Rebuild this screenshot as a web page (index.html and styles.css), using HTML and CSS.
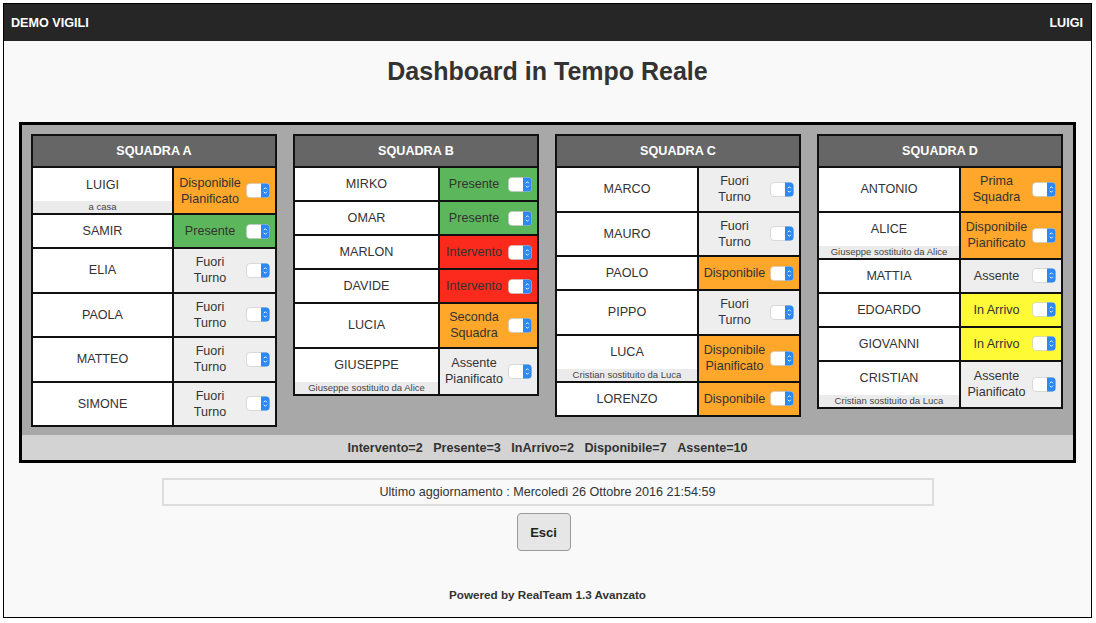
FILE: index.html
```html
<!DOCTYPE html>
<html lang="it">
<head>
<meta charset="utf-8">
<title>Dashboard in Tempo Reale</title>
<link rel="stylesheet" href="styles.css">
</head>
<body>
<div class="frame">
  <header class="topbar">
    <span class="brand">DEMO VIGILI</span>
    <span class="user">LUIGI</span>
  </header>

  <h1 class="title">Dashboard in Tempo Reale</h1>

  <section class="panel">
    <div class="squads">
      <div class="squad sq-a">
        <div class="sq-head">SQUADRA A</div>
        <div class="row">
          <div class="name"><span class="nm">LUIGI</span><span class="sub">a casa</span></div>
          <div class="st orange"><span class="lbl">Disponibile<br>Pianificato</span><svg class="tg" width="24" height="15" viewBox="0 0 24 15"><rect x=".5" y=".5" width="23" height="14" rx="3.5" fill="#fff" stroke="#c4c4c4" stroke-width=".6"/><path d="M15 .5h5a3.5 3.5 0 0 1 3.5 3.5v7a3.5 3.5 0 0 1-3.5 3.5h-5z" fill="#2b88f4"/><path d="M17.7 6.3 19.3 4.7 20.9 6.3M17.7 8.7 19.3 10.3 20.9 8.7" fill="none" stroke="#fff" stroke-width=".9"/></svg></div>
        </div>
        <div class="row">
          <div class="name"><span class="nm">SAMIR</span></div>
          <div class="st green"><span class="lbl">Presente</span><svg class="tg" width="24" height="15" viewBox="0 0 24 15"><rect x=".5" y=".5" width="23" height="14" rx="3.5" fill="#fff" stroke="#c4c4c4" stroke-width=".6"/><path d="M15 .5h5a3.5 3.5 0 0 1 3.5 3.5v7a3.5 3.5 0 0 1-3.5 3.5h-5z" fill="#2b88f4"/><path d="M17.7 6.3 19.3 4.7 20.9 6.3M17.7 8.7 19.3 10.3 20.9 8.7" fill="none" stroke="#fff" stroke-width=".9"/></svg></div>
        </div>
        <div class="row">
          <div class="name"><span class="nm">ELIA</span></div>
          <div class="st grey two"><span class="lbl">Fuori<br>Turno</span><svg class="tg" width="24" height="15" viewBox="0 0 24 15"><rect x=".5" y=".5" width="23" height="14" rx="3.5" fill="#fff" stroke="#c4c4c4" stroke-width=".6"/><path d="M15 .5h5a3.5 3.5 0 0 1 3.5 3.5v7a3.5 3.5 0 0 1-3.5 3.5h-5z" fill="#2b88f4"/><path d="M17.7 6.3 19.3 4.7 20.9 6.3M17.7 8.7 19.3 10.3 20.9 8.7" fill="none" stroke="#fff" stroke-width=".9"/></svg></div>
        </div>
        <div class="row">
          <div class="name"><span class="nm">PAOLA</span></div>
          <div class="st grey two"><span class="lbl">Fuori<br>Turno</span><svg class="tg" width="24" height="15" viewBox="0 0 24 15"><rect x=".5" y=".5" width="23" height="14" rx="3.5" fill="#fff" stroke="#c4c4c4" stroke-width=".6"/><path d="M15 .5h5a3.5 3.5 0 0 1 3.5 3.5v7a3.5 3.5 0 0 1-3.5 3.5h-5z" fill="#2b88f4"/><path d="M17.7 6.3 19.3 4.7 20.9 6.3M17.7 8.7 19.3 10.3 20.9 8.7" fill="none" stroke="#fff" stroke-width=".9"/></svg></div>
        </div>
        <div class="row">
          <div class="name"><span class="nm">MATTEO</span></div>
          <div class="st grey two"><span class="lbl">Fuori<br>Turno</span><svg class="tg" width="24" height="15" viewBox="0 0 24 15"><rect x=".5" y=".5" width="23" height="14" rx="3.5" fill="#fff" stroke="#c4c4c4" stroke-width=".6"/><path d="M15 .5h5a3.5 3.5 0 0 1 3.5 3.5v7a3.5 3.5 0 0 1-3.5 3.5h-5z" fill="#2b88f4"/><path d="M17.7 6.3 19.3 4.7 20.9 6.3M17.7 8.7 19.3 10.3 20.9 8.7" fill="none" stroke="#fff" stroke-width=".9"/></svg></div>
        </div>
        <div class="row">
          <div class="name"><span class="nm">SIMONE</span></div>
          <div class="st grey two"><span class="lbl">Fuori<br>Turno</span><svg class="tg" width="24" height="15" viewBox="0 0 24 15"><rect x=".5" y=".5" width="23" height="14" rx="3.5" fill="#fff" stroke="#c4c4c4" stroke-width=".6"/><path d="M15 .5h5a3.5 3.5 0 0 1 3.5 3.5v7a3.5 3.5 0 0 1-3.5 3.5h-5z" fill="#2b88f4"/><path d="M17.7 6.3 19.3 4.7 20.9 6.3M17.7 8.7 19.3 10.3 20.9 8.7" fill="none" stroke="#fff" stroke-width=".9"/></svg></div>
        </div>
      </div>

      <div class="squad sq-b">
        <div class="sq-head">SQUADRA B</div>
        <div class="row">
          <div class="name"><span class="nm">MIRKO</span></div>
          <div class="st green"><span class="lbl">Presente</span><svg class="tg" width="24" height="15" viewBox="0 0 24 15"><rect x=".5" y=".5" width="23" height="14" rx="3.5" fill="#fff" stroke="#c4c4c4" stroke-width=".6"/><path d="M15 .5h5a3.5 3.5 0 0 1 3.5 3.5v7a3.5 3.5 0 0 1-3.5 3.5h-5z" fill="#2b88f4"/><path d="M17.7 6.3 19.3 4.7 20.9 6.3M17.7 8.7 19.3 10.3 20.9 8.7" fill="none" stroke="#fff" stroke-width=".9"/></svg></div>
        </div>
        <div class="row">
          <div class="name"><span class="nm">OMAR</span></div>
          <div class="st green"><span class="lbl">Presente</span><svg class="tg" width="24" height="15" viewBox="0 0 24 15"><rect x=".5" y=".5" width="23" height="14" rx="3.5" fill="#fff" stroke="#c4c4c4" stroke-width=".6"/><path d="M15 .5h5a3.5 3.5 0 0 1 3.5 3.5v7a3.5 3.5 0 0 1-3.5 3.5h-5z" fill="#2b88f4"/><path d="M17.7 6.3 19.3 4.7 20.9 6.3M17.7 8.7 19.3 10.3 20.9 8.7" fill="none" stroke="#fff" stroke-width=".9"/></svg></div>
        </div>
        <div class="row">
          <div class="name"><span class="nm">MARLON</span></div>
          <div class="st red"><span class="lbl">Intervento</span><svg class="tg" width="24" height="15" viewBox="0 0 24 15"><rect x=".5" y=".5" width="23" height="14" rx="3.5" fill="#fff" stroke="#c4c4c4" stroke-width=".6"/><path d="M15 .5h5a3.5 3.5 0 0 1 3.5 3.5v7a3.5 3.5 0 0 1-3.5 3.5h-5z" fill="#2b88f4"/><path d="M17.7 6.3 19.3 4.7 20.9 6.3M17.7 8.7 19.3 10.3 20.9 8.7" fill="none" stroke="#fff" stroke-width=".9"/></svg></div>
        </div>
        <div class="row">
          <div class="name"><span class="nm">DAVIDE</span></div>
          <div class="st red"><span class="lbl">Intervento</span><svg class="tg" width="24" height="15" viewBox="0 0 24 15"><rect x=".5" y=".5" width="23" height="14" rx="3.5" fill="#fff" stroke="#c4c4c4" stroke-width=".6"/><path d="M15 .5h5a3.5 3.5 0 0 1 3.5 3.5v7a3.5 3.5 0 0 1-3.5 3.5h-5z" fill="#2b88f4"/><path d="M17.7 6.3 19.3 4.7 20.9 6.3M17.7 8.7 19.3 10.3 20.9 8.7" fill="none" stroke="#fff" stroke-width=".9"/></svg></div>
        </div>
        <div class="row">
          <div class="name"><span class="nm">LUCIA</span></div>
          <div class="st orange two"><span class="lbl">Seconda<br>Squadra</span><svg class="tg" width="24" height="15" viewBox="0 0 24 15"><rect x=".5" y=".5" width="23" height="14" rx="3.5" fill="#fff" stroke="#c4c4c4" stroke-width=".6"/><path d="M15 .5h5a3.5 3.5 0 0 1 3.5 3.5v7a3.5 3.5 0 0 1-3.5 3.5h-5z" fill="#2b88f4"/><path d="M17.7 6.3 19.3 4.7 20.9 6.3M17.7 8.7 19.3 10.3 20.9 8.7" fill="none" stroke="#fff" stroke-width=".9"/></svg></div>
        </div>
        <div class="row">
          <div class="name"><span class="nm">GIUSEPPE</span><span class="sub">Giuseppe sostituito da Alice</span></div>
          <div class="st grey"><span class="lbl">Assente<br>Pianificato</span><svg class="tg" width="24" height="15" viewBox="0 0 24 15"><rect x=".5" y=".5" width="23" height="14" rx="3.5" fill="#fff" stroke="#c4c4c4" stroke-width=".6"/><path d="M15 .5h5a3.5 3.5 0 0 1 3.5 3.5v7a3.5 3.5 0 0 1-3.5 3.5h-5z" fill="#2b88f4"/><path d="M17.7 6.3 19.3 4.7 20.9 6.3M17.7 8.7 19.3 10.3 20.9 8.7" fill="none" stroke="#fff" stroke-width=".9"/></svg></div>
        </div>
      </div>

      <div class="squad sq-c">
        <div class="sq-head">SQUADRA C</div>
        <div class="row">
          <div class="name"><span class="nm">MARCO</span></div>
          <div class="st grey two"><span class="lbl">Fuori<br>Turno</span><svg class="tg" width="24" height="15" viewBox="0 0 24 15"><rect x=".5" y=".5" width="23" height="14" rx="3.5" fill="#fff" stroke="#c4c4c4" stroke-width=".6"/><path d="M15 .5h5a3.5 3.5 0 0 1 3.5 3.5v7a3.5 3.5 0 0 1-3.5 3.5h-5z" fill="#2b88f4"/><path d="M17.7 6.3 19.3 4.7 20.9 6.3M17.7 8.7 19.3 10.3 20.9 8.7" fill="none" stroke="#fff" stroke-width=".9"/></svg></div>
        </div>
        <div class="row">
          <div class="name"><span class="nm">MAURO</span></div>
          <div class="st grey two"><span class="lbl">Fuori<br>Turno</span><svg class="tg" width="24" height="15" viewBox="0 0 24 15"><rect x=".5" y=".5" width="23" height="14" rx="3.5" fill="#fff" stroke="#c4c4c4" stroke-width=".6"/><path d="M15 .5h5a3.5 3.5 0 0 1 3.5 3.5v7a3.5 3.5 0 0 1-3.5 3.5h-5z" fill="#2b88f4"/><path d="M17.7 6.3 19.3 4.7 20.9 6.3M17.7 8.7 19.3 10.3 20.9 8.7" fill="none" stroke="#fff" stroke-width=".9"/></svg></div>
        </div>
        <div class="row">
          <div class="name"><span class="nm">PAOLO</span></div>
          <div class="st orange"><span class="lbl">Disponibile</span><svg class="tg" width="24" height="15" viewBox="0 0 24 15"><rect x=".5" y=".5" width="23" height="14" rx="3.5" fill="#fff" stroke="#c4c4c4" stroke-width=".6"/><path d="M15 .5h5a3.5 3.5 0 0 1 3.5 3.5v7a3.5 3.5 0 0 1-3.5 3.5h-5z" fill="#2b88f4"/><path d="M17.7 6.3 19.3 4.7 20.9 6.3M17.7 8.7 19.3 10.3 20.9 8.7" fill="none" stroke="#fff" stroke-width=".9"/></svg></div>
        </div>
        <div class="row">
          <div class="name"><span class="nm">PIPPO</span></div>
          <div class="st grey two"><span class="lbl">Fuori<br>Turno</span><svg class="tg" width="24" height="15" viewBox="0 0 24 15"><rect x=".5" y=".5" width="23" height="14" rx="3.5" fill="#fff" stroke="#c4c4c4" stroke-width=".6"/><path d="M15 .5h5a3.5 3.5 0 0 1 3.5 3.5v7a3.5 3.5 0 0 1-3.5 3.5h-5z" fill="#2b88f4"/><path d="M17.7 6.3 19.3 4.7 20.9 6.3M17.7 8.7 19.3 10.3 20.9 8.7" fill="none" stroke="#fff" stroke-width=".9"/></svg></div>
        </div>
        <div class="row">
          <div class="name"><span class="nm">LUCA</span><span class="sub">Cristian sostituito da Luca</span></div>
          <div class="st orange"><span class="lbl">Disponibile<br>Pianificato</span><svg class="tg" width="24" height="15" viewBox="0 0 24 15"><rect x=".5" y=".5" width="23" height="14" rx="3.5" fill="#fff" stroke="#c4c4c4" stroke-width=".6"/><path d="M15 .5h5a3.5 3.5 0 0 1 3.5 3.5v7a3.5 3.5 0 0 1-3.5 3.5h-5z" fill="#2b88f4"/><path d="M17.7 6.3 19.3 4.7 20.9 6.3M17.7 8.7 19.3 10.3 20.9 8.7" fill="none" stroke="#fff" stroke-width=".9"/></svg></div>
        </div>
        <div class="row">
          <div class="name"><span class="nm">LORENZO</span></div>
          <div class="st orange"><span class="lbl">Disponibile</span><svg class="tg" width="24" height="15" viewBox="0 0 24 15"><rect x=".5" y=".5" width="23" height="14" rx="3.5" fill="#fff" stroke="#c4c4c4" stroke-width=".6"/><path d="M15 .5h5a3.5 3.5 0 0 1 3.5 3.5v7a3.5 3.5 0 0 1-3.5 3.5h-5z" fill="#2b88f4"/><path d="M17.7 6.3 19.3 4.7 20.9 6.3M17.7 8.7 19.3 10.3 20.9 8.7" fill="none" stroke="#fff" stroke-width=".9"/></svg></div>
        </div>
      </div>

      <div class="squad sq-d">
        <div class="sq-head">SQUADRA D</div>
        <div class="row">
          <div class="name"><span class="nm">ANTONIO</span></div>
          <div class="st orange two"><span class="lbl">Prima<br>Squadra</span><svg class="tg" width="24" height="15" viewBox="0 0 24 15"><rect x=".5" y=".5" width="23" height="14" rx="3.5" fill="#fff" stroke="#c4c4c4" stroke-width=".6"/><path d="M15 .5h5a3.5 3.5 0 0 1 3.5 3.5v7a3.5 3.5 0 0 1-3.5 3.5h-5z" fill="#2b88f4"/><path d="M17.7 6.3 19.3 4.7 20.9 6.3M17.7 8.7 19.3 10.3 20.9 8.7" fill="none" stroke="#fff" stroke-width=".9"/></svg></div>
        </div>
        <div class="row">
          <div class="name"><span class="nm">ALICE</span><span class="sub">Giuseppe sostituito da Alice</span></div>
          <div class="st orange"><span class="lbl">Disponibile<br>Pianificato</span><svg class="tg" width="24" height="15" viewBox="0 0 24 15"><rect x=".5" y=".5" width="23" height="14" rx="3.5" fill="#fff" stroke="#c4c4c4" stroke-width=".6"/><path d="M15 .5h5a3.5 3.5 0 0 1 3.5 3.5v7a3.5 3.5 0 0 1-3.5 3.5h-5z" fill="#2b88f4"/><path d="M17.7 6.3 19.3 4.7 20.9 6.3M17.7 8.7 19.3 10.3 20.9 8.7" fill="none" stroke="#fff" stroke-width=".9"/></svg></div>
        </div>
        <div class="row">
          <div class="name"><span class="nm">MATTIA</span></div>
          <div class="st grey"><span class="lbl">Assente</span><svg class="tg" width="24" height="15" viewBox="0 0 24 15"><rect x=".5" y=".5" width="23" height="14" rx="3.5" fill="#fff" stroke="#c4c4c4" stroke-width=".6"/><path d="M15 .5h5a3.5 3.5 0 0 1 3.5 3.5v7a3.5 3.5 0 0 1-3.5 3.5h-5z" fill="#2b88f4"/><path d="M17.7 6.3 19.3 4.7 20.9 6.3M17.7 8.7 19.3 10.3 20.9 8.7" fill="none" stroke="#fff" stroke-width=".9"/></svg></div>
        </div>
        <div class="row">
          <div class="name"><span class="nm">EDOARDO</span></div>
          <div class="st yellow"><span class="lbl">In Arrivo</span><svg class="tg" width="24" height="15" viewBox="0 0 24 15"><rect x=".5" y=".5" width="23" height="14" rx="3.5" fill="#fff" stroke="#c4c4c4" stroke-width=".6"/><path d="M15 .5h5a3.5 3.5 0 0 1 3.5 3.5v7a3.5 3.5 0 0 1-3.5 3.5h-5z" fill="#2b88f4"/><path d="M17.7 6.3 19.3 4.7 20.9 6.3M17.7 8.7 19.3 10.3 20.9 8.7" fill="none" stroke="#fff" stroke-width=".9"/></svg></div>
        </div>
        <div class="row">
          <div class="name"><span class="nm">GIOVANNI</span></div>
          <div class="st yellow"><span class="lbl">In Arrivo</span><svg class="tg" width="24" height="15" viewBox="0 0 24 15"><rect x=".5" y=".5" width="23" height="14" rx="3.5" fill="#fff" stroke="#c4c4c4" stroke-width=".6"/><path d="M15 .5h5a3.5 3.5 0 0 1 3.5 3.5v7a3.5 3.5 0 0 1-3.5 3.5h-5z" fill="#2b88f4"/><path d="M17.7 6.3 19.3 4.7 20.9 6.3M17.7 8.7 19.3 10.3 20.9 8.7" fill="none" stroke="#fff" stroke-width=".9"/></svg></div>
        </div>
        <div class="row">
          <div class="name"><span class="nm">CRISTIAN</span><span class="sub">Cristian sostituito da Luca</span></div>
          <div class="st grey"><span class="lbl">Assente<br>Pianificato</span><svg class="tg" width="24" height="15" viewBox="0 0 24 15"><rect x=".5" y=".5" width="23" height="14" rx="3.5" fill="#fff" stroke="#c4c4c4" stroke-width=".6"/><path d="M15 .5h5a3.5 3.5 0 0 1 3.5 3.5v7a3.5 3.5 0 0 1-3.5 3.5h-5z" fill="#2b88f4"/><path d="M17.7 6.3 19.3 4.7 20.9 6.3M17.7 8.7 19.3 10.3 20.9 8.7" fill="none" stroke="#fff" stroke-width=".9"/></svg></div>
        </div>
      </div>
    </div>
    <div class="stats">Intervento=2&nbsp;&nbsp;&nbsp;Presente=3&nbsp;&nbsp;&nbsp;InArrivo=2&nbsp;&nbsp;&nbsp;Disponibile=7&nbsp;&nbsp;&nbsp;Assente=10</div>
  </section>

  <div class="update">Ultimo aggiornamento : Mercoledì 26 Ottobre 2016 21:54:59</div>
  <div class="actions"><button class="btn" type="button">Esci</button></div>
  <footer class="powered">Powered by RealTeam 1.3 Avanzato</footer>
</div>
</body>
</html>
```

FILE: styles.css
```css
* { box-sizing: border-box; }

html, body {
  margin: 0;
  padding: 0;
  background: #ffffff;
}

body {
  font-family: "Liberation Sans", Arial, Helvetica, sans-serif;
  color: #333333;
  padding: 3px 4px 0 3px;
}

.frame {
  height: 615px;
  border: 1px solid #000000;
  background: #f9f9f9;
  display: flex;
  flex-direction: column;
}

.topbar {
  height: 37px;
  background: #262626;
  color: #ffffff;
  font-weight: bold;
  font-size: 12.6px;
  display: flex;
  align-items: center;
  justify-content: space-between;
  padding: 0 8px 0 7px;
}

.title {
  margin: 15px 0 0;
  font-size: 25px;
  line-height: 30px;
  font-weight: bold;
  text-align: center;
  color: #333333;
}

.panel {
  margin: 36px 15px 0;
  border: 3px solid #000000;
  background: #a8a8a8;
}

.squads {
  display: grid;
  grid-template-columns: repeat(4, 1fr);
  column-gap: 16px;
  align-items: start;
  padding: 9px 10px 8px 9px;
}

.squad {
  border: 2px solid #111111;
  background: #ffffff;
}

.sq-head {
  height: 32px;
  border-bottom: 2px solid #111111;
  background: #666666;
  color: #ffffff;
  font-weight: bold;
  font-size: 12.6px;
  display: flex;
  align-items: center;
  justify-content: center;
}

.row {
  display: grid;
  grid-template-columns: 141px 1fr;
  border-bottom: 2px solid #111111;
  font-size: 12.6px;
}

.sq-b .row { grid-template-columns: 145px 1fr; }
.sq-c .row,
.sq-d .row { grid-template-columns: 142px 1fr; }

.row:last-child { border-bottom: 0; }

.name {
  border-right: 2px solid #111111;
  background: #ffffff;
  display: flex;
  flex-direction: column;
}

.nm {
  flex: 1;
  min-height: 32px;
  display: flex;
  align-items: center;
  justify-content: center;
}

.sub + .sub { display: none; }

.nm:not(:last-child) { min-height: 33px; }

.sub {
  height: 12px;
  line-height: 12px;
  font-size: 9.5px;
  text-align: center;
  background: #ebebeb;
  color: #444444;
}

.st {
  min-height: 32px;
  display: flex;
  align-items: center;
  padding: 5px 5px 5px 0;
}

.st.two { padding-bottom: 5.6px; }

.lbl {
  flex: 1;
  text-align: center;
  line-height: 16px;
}

.orange { background: #fea72a; }
.green  { background: #5cb65c; }
.red    { background: #fb2a1d; }
.yellow { background: #fffa36; }
.grey   { background: #eeeeee; }

.tg {
  display: block;
  flex: none;
  width: 24px;
  height: 15px;
}

.stats {
  height: 25px;
  background: #d3d3d3;
  font-weight: bold;
  font-size: 12.6px;
  display: flex;
  align-items: center;
  justify-content: center;
}

.update {
  margin: 15px auto 0;
  width: 772px;
  height: 28px;
  border: 2px solid #dddddd;
  font-size: 12.6px;
  display: flex;
  align-items: center;
  justify-content: center;
}

.actions {
  display: flex;
  justify-content: center;
  margin-top: 7px;
  padding-right: 8px;
}

.btn {
  width: 54px;
  height: 38px;
  border: 1px solid #9a9a9a;
  border-radius: 4px;
  background: #e6e6e6;
  font-family: "Liberation Sans", Arial, Helvetica, sans-serif;
  font-weight: bold;
  font-size: 13px;
  color: #222222;
  padding: 0;
}

.powered {
  margin-top: 37px;
  text-align: center;
  font-weight: bold;
  font-size: 11.7px;
  color: #333333;
}
```
